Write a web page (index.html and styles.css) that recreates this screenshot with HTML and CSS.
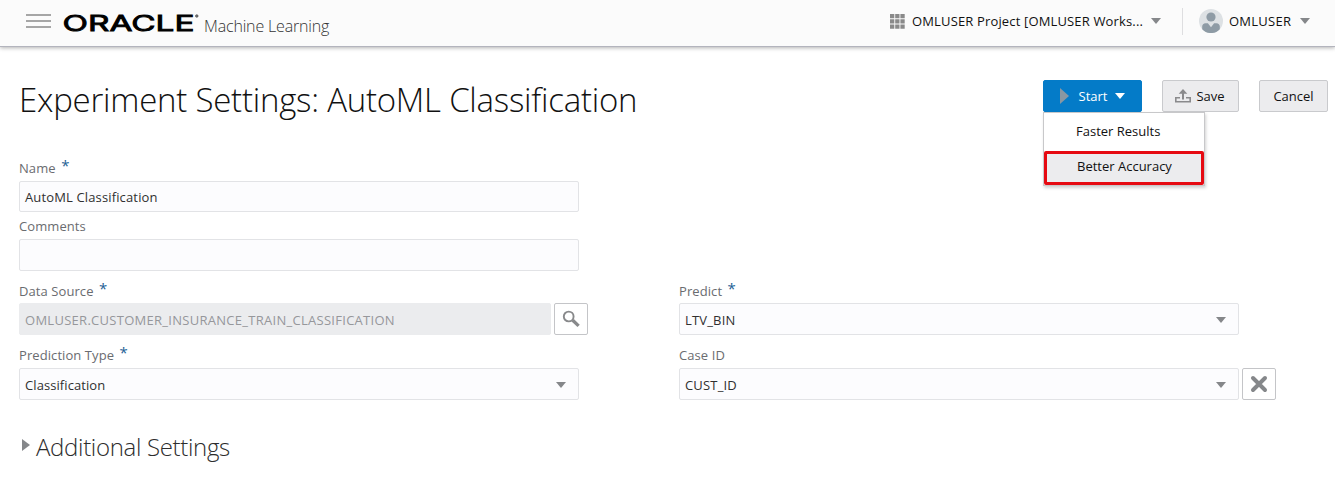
FILE: index.html
```html
<!DOCTYPE html>
<html lang="en">
<head>
<meta charset="utf-8">
<title>Experiment Settings</title>
<link rel="stylesheet" href="styles.css">
</head>
<body>
<header class="topbar">
  <svg class="burger" width="25" height="16" viewBox="0 0 25 16"><path d="M0 2h25M0 8h25M0 14h25" stroke="#8b8b8b" stroke-width="1.7"/></svg>
  <svg class="logo" width="138" height="28" viewBox="0 0 138 28"><text class="logo-text" x="-0.5" y="22" textLength="132" lengthAdjust="spacingAndGlyphs">ORACLE</text><circle cx="133.8" cy="7" r="1.3" fill="#777" stroke="#444" stroke-width="0.6"/></svg>
  <span class="product">Machine Learning</span>
  <div class="project">
    <svg width="15" height="15" viewBox="0 0 15 15" fill="#8a8a8a"><path d="M0 0h4.3v4.3H0zM5.2 0h4.3v4.3H5.2zM10.4 0h4.3v4.3h-4.3zM0 5.2h4.3v4.3H0zM5.2 5.2h4.3v4.3H5.2zM10.4 5.2h4.3v4.3h-4.3zM0 10.4h4.3v4.3H0zM5.2 10.4h4.3v4.3H5.2zM10.4 10.4h4.3v4.3h-4.3z"/></svg>
    <span class="project-name">OMLUSER Project [OMLUSER Works...</span>
    <i class="caret"></i>
  </div>
  <div class="user">
    <svg width="24" height="24" viewBox="0 0 24 24"><circle cx="12" cy="12" r="12" fill="#dde1e4"/><circle cx="12" cy="8" r="4.6" fill="#8e9ba5"/><path d="M3.2 20.2v-2.6c0-2 1.4-3.3 3.3-3.3h2.4l3.1 4 3.1-4h2.4c1.9 0 3.3 1.3 3.3 3.3v2.6A12 12 0 0 1 3.2 20.2z" fill="#8e9ba5"/></svg>
    <span class="user-name">OMLUSER</span>
    <i class="caret"></i>
  </div>
</header>
<main class="page">
  <div class="heading">
    <h1 class="title">Experiment Settings: AutoML Classification</h1>
    <div class="actions">
      <div class="start-wrap">
        <button class="btn start"><i class="play"></i><span class="start-label">Start</span><i class="caret light"></i></button>
        <div class="menu">
          <div class="item">Faster Results</div>
          <div class="item active">Better Accuracy</div>
        </div>
      </div>
      <button class="btn save"><svg width="16" height="14" viewBox="0 0 16 14" fill="none" stroke="#8a8a8c"><path d="M.8 8.500v4.300h14.400V8.500M0 8.800h5M11 8.800h5" stroke-width="1.600"/><path d="M8 10.500V3" stroke-width="2"/><path d="M8 0l4.300 4.700H3.700z" fill="#8a8a8c" stroke="none"/></svg><span>Save</span></button>
      <button class="btn cancel">Cancel</button>
    </div>
  </div>
  <div class="form">
    <div class="column">
      <label class="label label-name">Name <b class="req">*</b></label>
      <div class="input short"><span class="v-name">AutoML Classification</span></div>
      <label class="label label-comments">Comments</label>
      <div class="input"></div>
      <label class="label label-source">Data Source <b class="req">*</b></label>
      <div class="row">
        <div class="input disabled"><span class="v-source">OMLUSER.CUSTOMER_INSURANCE_TRAIN_CLASSIFICATION</span></div>
        <button class="square"><svg width="18" height="18" viewBox="0 0 18 18" fill="none" stroke="#88898b"><circle cx="6.7" cy="6.5" r="4.9" stroke-width="1.9"/><path d="M10.7 10.200l5.900 5.700" stroke-width="3.300"/></svg></button>
      </div>
      <label class="label">Prediction Type <b class="req">*</b></label>
      <div class="input"><span class="v-type">Classification</span><i class="caret"></i></div>
    </div>
    <div class="column right">
      <label class="label label-source">Predict <b class="req">*</b></label>
      <div class="input"><span class="v-id">LTV_BIN</span><i class="caret"></i></div>
      <label class="label">Case ID</label>
      <div class="row">
        <div class="input"><span class="v-id">CUST_ID</span><i class="caret"></i></div>
        <button class="square"><svg width="18" height="18" viewBox="0 0 18 18"><path d="M3 3l12 12M15 3L3 15" stroke="#85878a" stroke-width="4" stroke-linecap="round"/></svg></button>
      </div>
    </div>
  </div>
  <div class="disclosure"><i class="tri"></i><h2 class="subtitle">Additional Settings</h2></div>
</main>
</body>
</html>
```

FILE: styles.css
```css
* { box-sizing: border-box; }
body { margin: 0; background: #fff; color: #2d2d2d; font-family: "Open Sans", "Noto Sans", sans-serif; font-size: 13px; }
button { font: inherit; color: inherit; padding: 0; margin: 0; }
h1, h2 { margin: 0; font-weight: 300; white-space: nowrap; }
svg { display: block; flex: none; }

.topbar { height: 47px; display: flex; align-items: center; background: #fbfbfb; border-bottom: 1px solid #b3b4bd; box-shadow: 0 1px 4px rgba(0,0,0,.3); padding: 0 25px 4px 26px; white-space: nowrap; }
.logo { margin-left: 12px; margin-top: 3px; overflow: visible; }
.logo-text { font-family: Inter, sans-serif; font-size: 21.5px; font-weight: 400; fill: #000; stroke: #000; stroke-width: .8px; }
.product { margin-left: 3px; margin-top: 9px; font-size: 16px; font-weight: 300; color: #333; letter-spacing: -.17px; }
.project { display: flex; align-items: center; margin-left: auto; margin-right: 21px; }
.project-name { width: 231px; margin: 0 8px 0 7px; color: #111; letter-spacing: .15px; }
.user { display: flex; align-items: center; height: 27px; border-left: 1px solid #dedee0; padding-left: 16px; }
.user-name { width: 63px; margin: 0 8px 0 6px; color: #111; letter-spacing: .25px; }
.caret { flex: none; border: 5px solid transparent; border-top: 6px solid #85878a; border-bottom: 0; }
.caret.light { border-top-color: #fff; }

.page { padding: 33px 7px 0 19px; }
.heading { height: 77px; display: flex; justify-content: space-between; }
.title { font-size: 33px; line-height: 39px; color: #111; letter-spacing: -.24px; }
.actions { display: flex; gap: 20px; }
.btn { height: 32px; border: 1px solid #c9cacd; border-radius: 2px; background: #ececee; display: flex; align-items: center; justify-content: center; color: #111; }
.start-wrap { position: relative; }
.start { width: 99px; background: #047bc8; border-color: #047bc8; color: #fff; }
.play { border: 8px solid transparent; border-left: 9px solid #8997a2; border-right: 0; margin-right: 10px; }
.start-label { margin-right: 8px; }
.save { width: 77px; gap: 5px; padding-right: 1px; }
.cancel { width: 69px; }
.menu { position: absolute; left: 0; top: 32px; width: 162px; height: 74px; border: 1px solid #c8c8ca; background: #fff; box-shadow: 1px 2px 3px rgba(0,0,0,.18); z-index: 1; }
.item { height: 38px; line-height: 37px; padding-left: 32px; white-space: nowrap; color: #111; }
.item.active { height: 34px; line-height: 25px; padding-left: 30px; border: 3px solid #e60a12; border-radius: 2px; background: #ececee; }

.form { display: flex; gap: 91px; align-items: flex-end; height: 243px; }
.column { width: 569px; display: flex; flex-direction: column; flex: none; }
.column.right { width: 597px; }
.label { height: 33px; padding-top: 11px; line-height: 18px; color: #6a6c70; white-space: nowrap; letter-spacing: .08px; }
.label-name { height: 25px; padding-top: 3px; }
.label-comments { height: 27px; padding-top: 5px; }
.label-source { height: 32px; padding-top: 11px; }
.req { font-weight: 400; color: #236195; font-size: 15px; line-height: 0; margin-left: 2px; position: relative; top: -2px; }
.input { width: 560px; height: 32px; flex: none; border: 1px solid #e2e3e6; border-radius: 2px; background: #fcfcfe; display: flex; align-items: center; justify-content: space-between; padding: 1px 12px 0 5px; white-space: nowrap; color: #303030; }
.input.short { height: 31px; padding-top: 0; }
.v-name { letter-spacing: .14px; }
.v-type { letter-spacing: .08px; }
.v-id { letter-spacing: .18px; }
.v-source { letter-spacing: .28px; }
.row { display: flex; gap: 3px; }
.input.disabled { width: 532px; background: #ebecee; border-color: #ebecee; color: #96979b; }
.square { width: 34px; height: 32px; flex: none; border: 1px solid #c4c5c8; border-radius: 2px; background: #fff; display: flex; align-items: center; justify-content: center; }
.disclosure { display: flex; align-items: center; margin-top: 29px; }
.tri { border: 6px solid transparent; border-left: 8px solid #85878a; border-right: 0; margin: 0 6px 5px 3px; }
.subtitle { font-size: 24px; line-height: 36px; letter-spacing: -.32px; }
```
